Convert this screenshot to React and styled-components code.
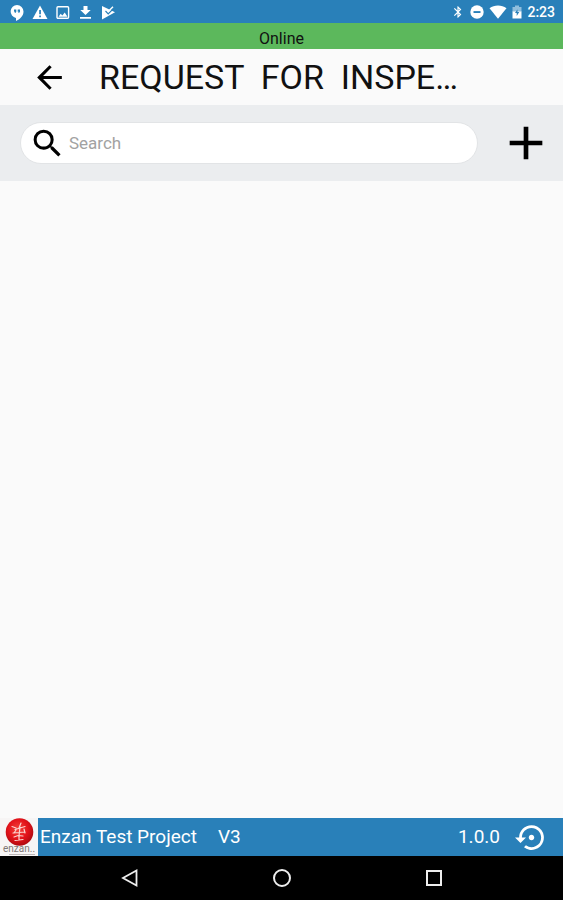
import React, { useState } from 'react'
import styled, { createGlobalStyle } from 'styled-components'
import {
    MdArrowBack,
    MdSearch,
    MdAdd,
    MdSettingsBackupRestore,
    MdBluetooth
} from 'react-icons/md'

const GlobalStyle = createGlobalStyle`
    *, *::before, *::after {
        box-sizing: border-box;
    }

    body {
        margin: 0;
        background: #fafafa;
        font-family: Roboto, "Liberation Sans", sans-serif;
    }

    svg {
        display: block;
        flex: none;
    }
`;

const Screen = styled.div`
    display: flex;
    flex-direction: column;
    min-height: 100vh;
    background: #fafafa;
    color: #111;
`;

//android status bar
const StatusBar = styled.div`
    display: flex;
    justify-content: space-between;
    align-items: center;
    height: 23px;
    padding: 0 8px;
    background: #2980b9;
    color: #fff;
`;

const StatusGroup = styled.div`
    display: flex;
    align-items: center;
    gap: 5px;
`;

const Clock = styled.span`
    font-size: 14px;
    font-weight: 500;
    line-height: 24px;
`;

const OnlineBanner = styled.div`
    height: 26px;
    background: #5cb85c;
    font-size: 16px;
    line-height: 32px;
    text-align: center;
`;

const Header = styled.header`
    display: flex;
    align-items: center;
    gap: 31px;
    height: 56px;
    padding: 0 31px;
`;

const IconButton = styled.button`
    display: flex;
    flex: none;
    padding: 0;
    border: 0;
    background: none;
    color: ${props => props.$color || '#000'};
    cursor: pointer;
`;

const Title = styled.h1`
    margin: 0;
    overflow: hidden;
    font-size: 34px;
    font-weight: 400;
    line-height: 56px;
    white-space: pre;
`;

const SearchBar = styled.div`
    display: flex;
    align-items: center;
    gap: 20px;
    height: 76px;
    padding: 0 9px 0 20px;
    background: #ebedef;
`;

const SearchField = styled.label`
    display: flex;
    flex: 1;
    align-items: center;
    gap: 3px;
    height: 42px;
    padding: 0 20px 0 8px;
    border: 1px solid #e2e4e6;
    border-radius: 21px;
    background: #fff;
`;

const SearchInput = styled.input`
    flex: 1;
    min-width: 0;
    padding: 0;
    border: 0;
    outline: none;
    background: none;
    font-family: inherit;
    font-size: 17px;
    line-height: 24px;

    &::placeholder {
        color: #a2a2a2;
        opacity: 1;
    }
`;

const Content = styled.main`
    flex: 1;
`;

const Footer = styled.footer`
    display: flex;
    align-items: center;
    height: 38px;
    padding-right: 15px;
    background: #2980b9;
    color: #fff;
    font-size: 19px;
    line-height: 40px;
`;

const LogoBox = styled.div`
    width: 38px;
    height: 38px;
    margin-right: 2px;
    background: #f7f5f5;
`;

const Version = styled.span`
    margin-left: 21px;
`;

const Release = styled.span`
    margin-left: auto;
    margin-right: 15px;
`;

const NavBar = styled.nav`
    display: flex;
    justify-content: center;
    align-items: center;
    gap: 132px;
    height: 44px;
    background: #000;
`;

const HangoutsIcon = () => (
    <svg width="18" height="18" viewBox="0 0 18 18">
        <path fill="#fff" d="M9 2a6.500 6.500 0 0 0-1 12.900V18c3.800-1.700 7.500-5 7.500-9.500A6.500 6.500 0 0 0 9 2z" />
        <path fill="#2980b9" d="M6 6.500h2.300v2.300L7.300 10H6.600l.4-1.200H6zM9.700 6.500H12v2.300L11 10h-.7l.4-1.200h-1z" />
    </svg>
)

const WarningIcon = () => (
    <svg width="18" height="18" viewBox="0 0 18 18">
        <path fill="#fff" d="M9 2.500L1.500 16h15z" />
        <path fill="#2980b9" d="M8.200 7h1.700v4.200H8.200zM8.200 12.500h1.700v1.700H8.200z" />
    </svg>
)

const PictureIcon = () => (
    <svg width="18" height="18" viewBox="0 0 18 18">
        <rect x="3" y="3.700" width="11.600" height="11.600" rx="1" fill="none" stroke="#fff" strokeWidth="1.400" />
        <path fill="#fff" d="M4.500 13.700l2.200-3 1.700 1.800 2.300-2.900 2.800 4.100z" />
    </svg>
)

const DownloadIcon = () => (
    <svg width="18" height="18" viewBox="0 0 18 18">
        <path fill="#fff" d="M6.500 3h4v4h3.200l-5.200 5-5.200-5h3.200zM3 14h11v1.800H3z" />
    </svg>
)

const PlayCheckIcon = () => (
    <svg width="18" height="18" viewBox="0 0 18 18">
        <path fill="#fff" d="M2 3l13 6.200L2 16.500z" />
        <path fill="none" stroke="#2980b9" strokeWidth="1.200" d="M5.500 8l2.700 2.800L14.500 4.500" />
        <path fill="none" stroke="#fff" strokeWidth="1.500" d="M8.500 8.300L13 3.800" />
    </svg>
)

const DoNotDisturbIcon = () => (
    <svg width="14" height="14" viewBox="0 0 14 14">
        <circle cx="7" cy="7" r="6.700" fill="#fff" />
        <path fill="#2980b9" d="M3.500 6.100h7v1.900h-7z" />
    </svg>
)

const WifiIcon = () => (
    <svg width="18" height="14" viewBox="0 0 18 14">
        <path fill="#fff" d="M9 13.800L.5 3.300C3 1.400 5.800.5 9 .5s6 .9 8.500 2.800z" />
    </svg>
)

const BatteryIcon = () => (
    <svg width="10" height="14" viewBox="0 0 10 14">
        <path fill="#8fbedd" d="M3 .5h4V2h2.500v5h-9V2H3z" />
        <path fill="#fff" d="M.5 6.500h9v7h-9z" />
        <path fill="#2980b9" d="M5.500 4.300L3 8h1.700v3L7.300 7H5.500z" />
    </svg>
)

const EnzanLogo = () => (
    <svg width="38" height="38" viewBox="0 0 38 38" role="img" aria-label="Company logo">
        <defs>
            <radialGradient id="ball" cx="45%" cy="40%" r="60%">
                <stop offset="0" stopColor="#f4453c" />
                <stop offset="0.600" stopColor="#e3131a" />
                <stop offset="1" stopColor="#b00a10" />
            </radialGradient>
        </defs>
        <circle cx="19.500" cy="14" r="13.800" fill="url(#ball)" />
        <g fill="none" stroke="#fbd3cf" strokeWidth="1.200" strokeLinecap="round">
            <path d="M12 8.500l4 1.500M21 5l-2 5M15 11.500l10-3M13 15l12-1M20 9l-1 9M16 12l-2 3M24 11l1 4" />
            <path d="M14 19l4-1.500 5 .5M19 18v4M15 22.500l8-1" />
        </g>
        <text x="3" y="34" fontSize="10" fill="#807876" fontFamily="Roboto, sans-serif">enzan..</text>
        <path stroke="#bdb8b8" strokeWidth="1" d="M9 36.500h26" />
    </svg>
)

const App = () => {

    const [search, setSearch] = useState('')

    return (
        <>
            <GlobalStyle />
            <Screen>
                <StatusBar>
                    <StatusGroup>
                        <HangoutsIcon />
                        <WarningIcon />
                        <PictureIcon />
                        <DownloadIcon />
                        <PlayCheckIcon />
                    </StatusGroup>
                    <StatusGroup>
                        <MdBluetooth size={14} />
                        <DoNotDisturbIcon />
                        <WifiIcon />
                        <BatteryIcon />
                        <Clock>2:23</Clock>
                    </StatusGroup>
                </StatusBar>

                <OnlineBanner>Online</OnlineBanner>

                <Header>
                    <IconButton aria-label="Back"><MdArrowBack size={37} /></IconButton>
                    <Title>{'REQUEST  FOR  INSPE…'}</Title>
                </Header>

                <SearchBar>
                    <SearchField>
                        <MdSearch size={37} color="#000" />
                        <SearchInput
                            type="text"
                            aria-label="Search"
                            placeholder="Search"
                            value={search}
                            onChange={(e) => setSearch(e.target.value)}
                        />
                    </SearchField>
                    <IconButton aria-label="Add"><MdAdd size={56} /></IconButton>
                </SearchBar>

                <Content />

                <Footer>
                    <LogoBox><EnzanLogo /></LogoBox>
                    <span>Enzan Test Project</span>
                    <Version>V3</Version>
                    <Release>1.0.0</Release>
                    <IconButton aria-label="Restore" $color="#fff"><MdSettingsBackupRestore size={33} /></IconButton>
                </Footer>

                <NavBar>
                    <IconButton aria-label="System back">
                        <svg width="20" height="20" viewBox="0 0 20 20">
                            <path d="M16.500 2.500v15L3 10z" fill="none" stroke="#eee" strokeWidth="1.800" />
                        </svg>
                    </IconButton>
                    <IconButton aria-label="System home">
                        <svg width="20" height="20" viewBox="0 0 20 20">
                            <circle cx="10" cy="10" r="8" fill="none" stroke="#eee" strokeWidth="2" />
                        </svg>
                    </IconButton>
                    <IconButton aria-label="System overview">
                        <svg width="20" height="20" viewBox="0 0 20 20">
                            <rect x="3" y="3" width="14" height="14" fill="none" stroke="#eee" strokeWidth="2" />
                        </svg>
                    </IconButton>
                </NavBar>
            </Screen>
        </>
    )
}

export default App
